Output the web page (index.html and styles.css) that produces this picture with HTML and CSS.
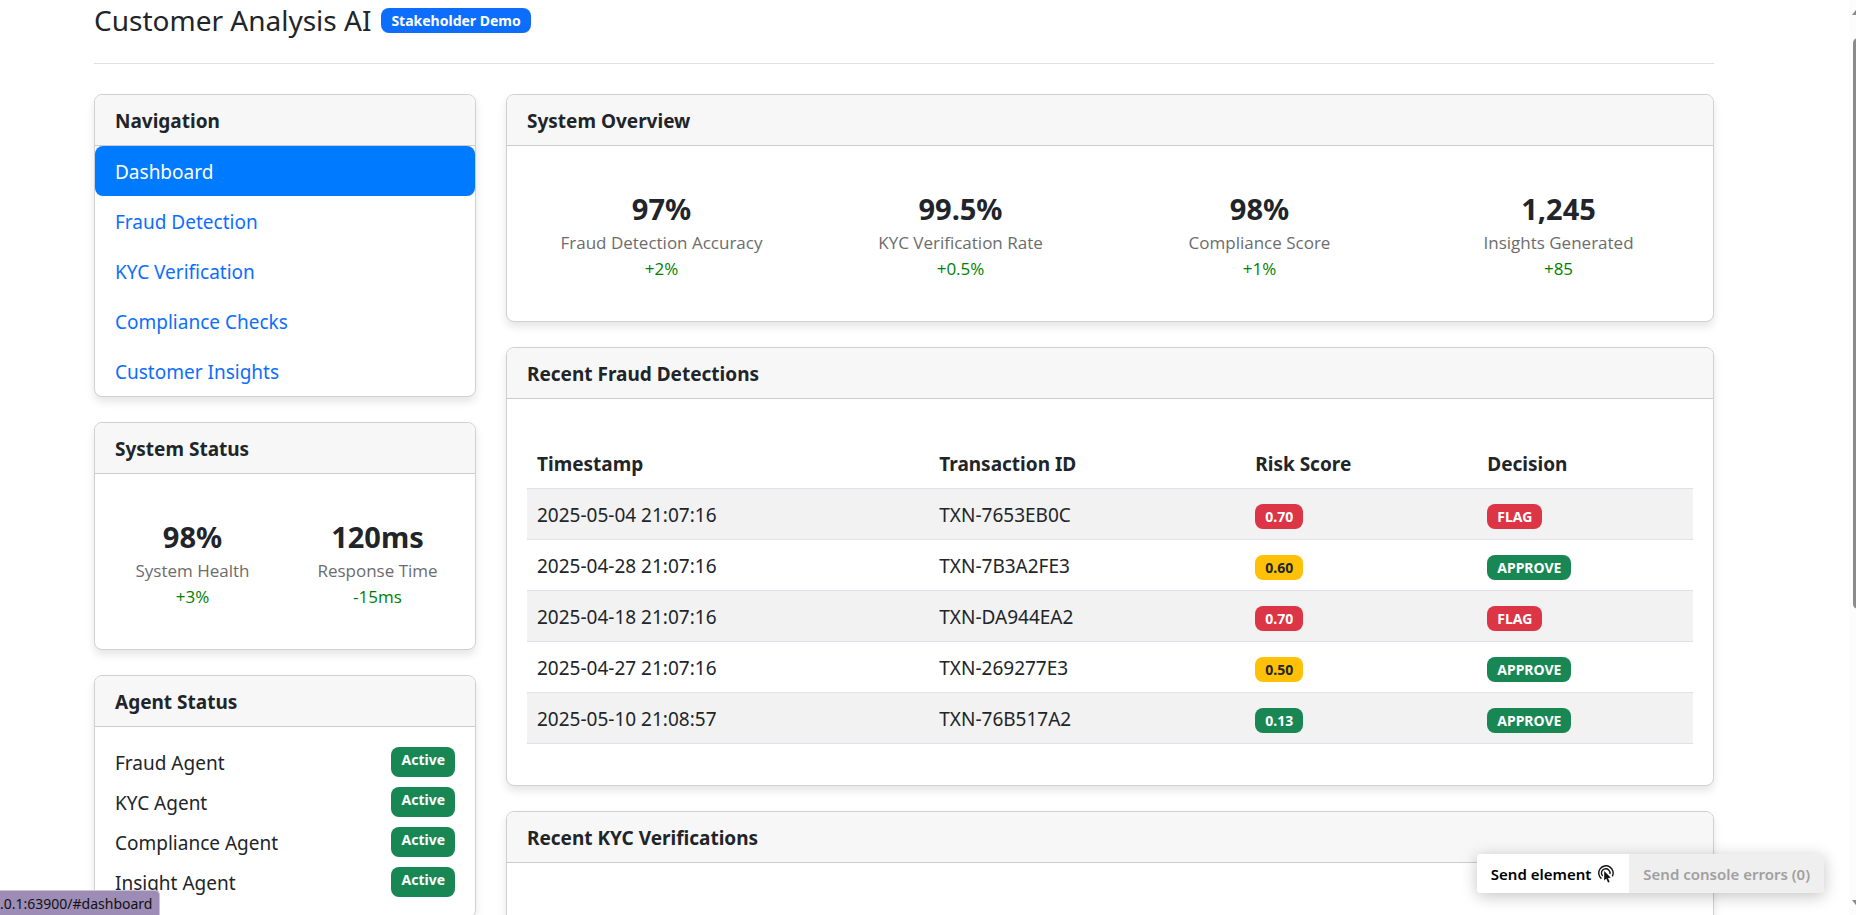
FILE: index.html
```html
<!DOCTYPE html>
<html lang="en">
<head>
<meta charset="utf-8">
<title>Customer Analysis AI</title>
<link rel="stylesheet" href="styles.css">
</head>
<body>
<div class="page">
  <header class="page-header">
    <h1 class="title">Customer Analysis AI</h1>
    <span class="badge primary">Stakeholder Demo</span>
  </header>
  <div class="layout">
    <aside class="column">
      <section class="card">
        <h2 class="card-header">Navigation</h2>
        <nav class="nav">
          <a class="nav-link active" href="#dashboard">Dashboard</a>
          <a class="nav-link" href="#fraud">Fraud Detection</a>
          <a class="nav-link" href="#kyc">KYC Verification</a>
          <a class="nav-link" href="#compliance">Compliance Checks</a>
          <a class="nav-link" href="#insights">Customer Insights</a>
        </nav>
      </section>
      <section class="card">
        <h2 class="card-header">System Status</h2>
        <div class="metrics">
          <div class="metric"><div class="value">98%</div><div class="label">System Health</div><div class="change">+3%</div></div>
          <div class="metric"><div class="value">120ms</div><div class="label">Response Time</div><div class="change">-15ms</div></div>
        </div>
      </section>
      <section class="card">
        <h2 class="card-header">Agent Status</h2>
        <ul class="agents">
          <li class="agent"><span class="agent-name">Fraud Agent</span><span class="badge success">Active</span></li>
          <li class="agent"><span class="agent-name">KYC Agent</span><span class="badge success">Active</span></li>
          <li class="agent"><span class="agent-name">Compliance Agent</span><span class="badge success">Active</span></li>
          <li class="agent"><span class="agent-name">Insight Agent</span><span class="badge success">Active</span></li>
        </ul>
      </section>
    </aside>
    <main class="column">
      <section class="card">
        <h2 class="card-header">System Overview</h2>
        <div class="metrics">
          <div class="metric"><div class="value">97%</div><div class="label">Fraud Detection Accuracy</div><div class="change">+2%</div></div>
          <div class="metric"><div class="value">99.5%</div><div class="label">KYC Verification Rate</div><div class="change">+0.5%</div></div>
          <div class="metric"><div class="value">98%</div><div class="label">Compliance Score</div><div class="change">+1%</div></div>
          <div class="metric"><div class="value">1,245</div><div class="label">Insights Generated</div><div class="change">+85</div></div>
        </div>
      </section>
      <section class="card">
        <h2 class="card-header">Recent Fraud Detections</h2>
        <div class="table-wrap">
          <table class="table">
            <colgroup><col class="col-time"><col class="col-id"><col class="col-risk"><col></colgroup>
            <thead>
              <tr><th>Timestamp</th><th>Transaction ID</th><th>Risk Score</th><th>Decision</th></tr>
            </thead>
            <tbody>
              <tr><td>2025-05-04 21:07:16</td><td>TXN-7653EB0C</td><td><span class="badge danger">0.70</span></td><td><span class="badge danger">FLAG</span></td></tr>
              <tr><td>2025-04-28 21:07:16</td><td>TXN-7B3A2FE3</td><td><span class="badge warning">0.60</span></td><td><span class="badge success">APPROVE</span></td></tr>
              <tr><td>2025-04-18 21:07:16</td><td>TXN-DA944EA2</td><td><span class="badge danger">0.70</span></td><td><span class="badge danger">FLAG</span></td></tr>
              <tr><td>2025-04-27 21:07:16</td><td>TXN-269277E3</td><td><span class="badge warning">0.50</span></td><td><span class="badge success">APPROVE</span></td></tr>
              <tr><td>2025-05-10 21:08:57</td><td>TXN-76B517A2</td><td><span class="badge success">0.13</span></td><td><span class="badge success">APPROVE</span></td></tr>
            </tbody>
          </table>
        </div>
      </section>
      <section class="card card-open">
        <h2 class="card-header">Recent KYC Verifications</h2>
      </section>
    </main>
  </div>
</div>
<div class="tools">
  <button class="tool" type="button">Send element
    <svg width="18" height="19" viewBox="0 0 18 19" fill="none" stroke="#111" stroke-width="1.4" aria-hidden="true">
      <path d="M4.400 13.600A7.200 7.200 0 1 1 15.300 11.400"/>
      <path d="M5.600 11A4.300 4.300 0 1 1 12.900 9"/>
      <path d="M7.200 6 L7.200 15.400 L9.300 13.400 L11 17.600 L12.600 16.900 L11 13 L13.800 12.800 Z" fill="#111" stroke="none"/>
    </svg>
  </button>
  <button class="tool" type="button" disabled>Send console errors (0)</button>
</div>
<div class="link-status">.0.1:63900/#dashboard</div>
<div class="scrollbar" aria-hidden="true">
  <svg class="arrow" width="14" height="7" viewBox="0 0 14 7"><path d="M1 7 6 0.5Q7-.5 8 .5L13 7Z" fill="#8b8b8b"/></svg>
  <div class="track"><div class="thumb"></div></div>
  <svg class="arrow" width="14" height="7" viewBox="0 0 14 7"><path d="M1 0 6 6.500Q7 7.500 8 6.500L13 0Z" fill="#8b8b8b"/></svg>
</div>
</body>
</html>
```
FILE: styles.css
```css
* { box-sizing: border-box; }

body {
  margin: 0;
  height: 100vh;
  overflow: hidden;
  background: #fff;
  color: #212529;
  font: 19px/30px "Noto Sans", "Open Sans", sans-serif;
}

.page {
  height: 100vh;
  overflow: hidden;
  padding: 0 142px 0 94px;
}

.page-header {
  display: flex;
  align-items: center;
  gap: 10px;
  padding: 1px 0 24px;
  margin-bottom: 30px;
  border-bottom: 1px solid #dee2e6;
}

.title {
  margin: 0;
  font-size: 28px;
  font-weight: 400;
  line-height: 38px;
}

.layout {
  display: grid;
  grid-template-columns: 382fr 1208fr;
  gap: 30px;
  align-items: start;
}

.column {
  display: flex;
  flex-direction: column;
  gap: 25px;
  min-width: 0;
}

.card {
  border: 1px solid #d0d0d0;
  border-radius: 8px;
  background: #fff;
  box-shadow: 0 5px 8px rgba(0, 0, 0, 0.1);
}

.card-open { min-height: 240px; }

.card-header {
  margin: 0;
  padding: 11px 20px 9px;
  border-bottom: 1px solid #cbcbcb;
  border-radius: 7px 7px 0 0;
  background: #f7f7f7;
  font-size: 19px;
  font-weight: 700;
  line-height: 30px;
}

.nav { display: flex; flex-direction: column; }

.nav-link {
  padding: 11px 20px 9px;
  border-radius: 8px;
  color: #0d6efd;
  text-decoration: none;
}

.nav-link.active { background: #007bff; color: #fff; }

.metrics {
  display: flex;
  padding: 41px 5px 39px;
  text-align: center;
}

.metric { flex: 1; }

.value {
  font-size: 29px;
  font-weight: 700;
  line-height: 43px;
}

.label, .change {
  font-family: "Open Sans", "Noto Sans", sans-serif;
  font-size: 17px;
  line-height: 26px;
}
.label { color: #6c6c6c; }
.change { color: #008000; }

.agents {
  display: flex;
  flex-direction: column;
  gap: 10px;
  margin: 0;
  padding: 20px;
  list-style: none;
}

.agent { display: flex; justify-content: space-between; height: 30px; }
.agent-name { padding-top: 1px; }

.badge {
  display: inline-block;
  padding: 5px 10px;
  border-radius: 8px;
  color: #fff;
  font-size: 14px;
  font-weight: 700;
  line-height: 15px;
  white-space: nowrap;
}

.primary { background: #0d6efd; }
.success { background: #198754; }
.danger { background: #dc3545; }
.warning { background: #ffc107; color: #212529; }

.table-wrap { padding: 39px 20px 41px; }

.table {
  width: 100%;
  table-layout: fixed;
  border-collapse: separate;
  border-spacing: 0;
}

.col-time { width: 34.5%; }
.col-id { width: 27.1%; }
.col-risk { width: 19.9%; }

.table th, .table td {
  padding: 11px 10px 9px;
  border-bottom: 1px solid #dee2e6;
  text-align: left;
  line-height: 30px;
}

.table th { font-weight: 700; }
.table tbody tr:nth-child(odd) { background: #f2f2f2; }

.tools {
  position: fixed;
  right: 32px;
  bottom: 22px;
  display: flex;
  border-radius: 4px;
  overflow: hidden;
  box-shadow: 0 3px 16px rgba(0, 0, 0, 0.24);
}

.tool {
  display: flex;
  align-items: center;
  gap: 6px;
  padding: 10px 14px 8px;
  border: 0;
  background: #fff;
  color: #000;
  font: 600 15px/21px "Noto Sans", "Open Sans", sans-serif;
}

.tool:disabled { background: #efefef; color: #a0a0a0; }

.link-status {
  position: fixed;
  left: 0;
  bottom: 0;
  padding: 3px 7px 1px 0;
  border-top: 1px solid #c9c3d2;
  border-right: 1px solid #c9c3d2;
  border-top-right-radius: 5px;
  background: #9d8cb5;
  color: #111;
  font-size: 14px;
  line-height: 20px;
}

.scrollbar {
  position: fixed;
  top: 0;
  right: -11px;
  bottom: 0;
  display: flex;
  flex-direction: column;
  align-items: center;
  gap: 23px;
  width: 18px;
  padding: 8px 0;
  background: #fcfcfc;
}

.arrow { flex: none; }
.track { flex: 1; }

.thumb {
  width: 10px;
  height: 68%;
  border-radius: 5px;
  background: #8b8b8b;
}
```
